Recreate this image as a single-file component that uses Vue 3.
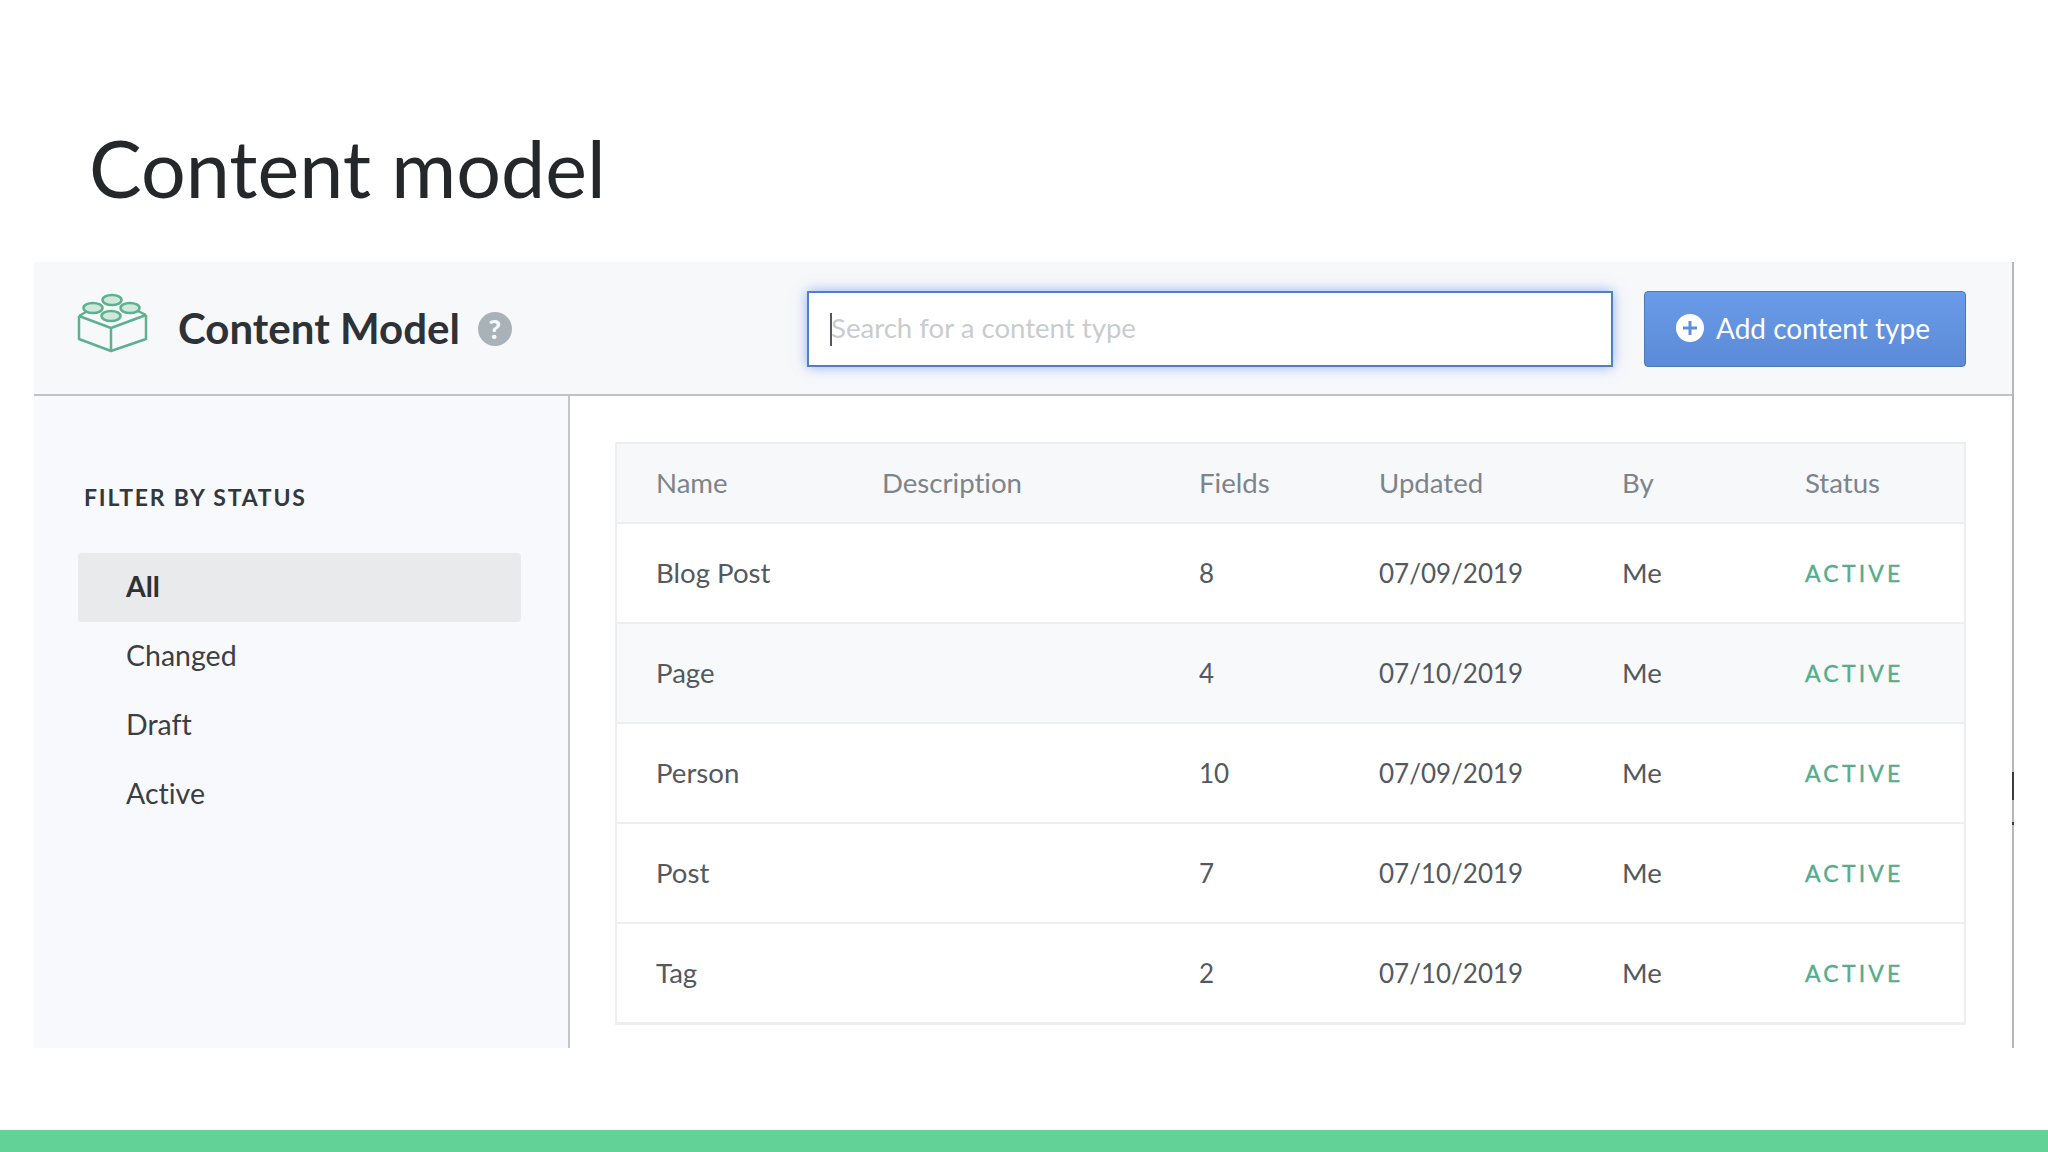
<template>
  <div class="page">
    <h1 class="slide-title">Content model</h1>

    <div class="frame">
      <span class="edge-mark long"></span>
      <span class="edge-mark dot"></span>

      <header class="topbar">
        <svg class="logo" viewBox="15 12 75 62" width="75" height="62">
          <g fill="none" stroke="#5cb18f" stroke-width="2.5" stroke-linejoin="round">
            <path d="M19 36 L51 48 L86 35 M19 36 V59 L51 71 L86 59 V35 M51 48 V71" />
            <path d="M19 36 L26 32 M86 35 L78 31" />
            <ellipse class="stud" cx="52" cy="20" rx="9.5" ry="5" />
            <ellipse class="stud" cx="33" cy="28" rx="9.5" ry="5" />
            <ellipse class="stud" cx="70" cy="28" rx="9.5" ry="5" />
            <ellipse class="stud" cx="51" cy="36" rx="9.5" ry="5" />
          </g>
        </svg>
        <h2 class="app-title">Content Model</h2>
        <span class="help">?</span>
        <div class="search">
          <span class="caret"></span>
          <span class="placeholder">Search for a content type</span>
        </div>
        <button class="add-btn">
          <svg viewBox="0 0 30 30" width="30" height="30">
            <circle cx="15" cy="15" r="14" fill="#fff" />
            <path d="M15 8 V22 M8 15 H22" stroke="#5f8fdc" stroke-width="3" />
          </svg>
          Add content type
        </button>
      </header>

      <div class="body">
        <aside class="sidebar">
          <div class="filter-title">FILTER BY STATUS</div>
          <ul class="filter-list">
            <li
                v-for="(f, i) in filters"
                :key="f"
                class="filter-item"
                :class="{ selected: i === 0 }"
            >{{ f }}</li>
          </ul>
        </aside>

        <main class="content">
          <div class="table">
            <div class="row head">
              <span v-for="c in columns" :key="c">{{ c }}</span>
            </div>
            <div
                v-for="(r, i) in rows"
                :key="r.name"
                class="row"
                :class="{ shaded: i === 1 }"
            >
              <span>{{ r.name }}</span>
              <span></span>
              <span class="num">{{ r.fields }}</span>
              <span class="num">{{ r.updated }}</span>
              <span>Me</span>
              <span class="status">ACTIVE</span>
            </div>
          </div>
        </main>
      </div>
    </div>

    <div class="footer-bar"></div>
  </div>
</template>

<script setup>
const filters = ['All', 'Changed', 'Draft', 'Active']
const columns = ['Name', 'Description', 'Fields', 'Updated', 'By', 'Status']

const rows = [
  { name: 'Blog Post', fields: 8, updated: '07/09/2019' },
  { name: 'Page', fields: 4, updated: '07/10/2019' },
  { name: 'Person', fields: 10, updated: '07/09/2019' },
  { name: 'Post', fields: 7, updated: '07/10/2019' },
  { name: 'Tag', fields: 2, updated: '07/10/2019' }
]
</script>

<style>
html, body {
  margin: 0;
  background: #fff;
}
</style>

<style scoped>
.page {
  width: 2048px;
  height: 1152px;
  display: flex;
  flex-direction: column;
  overflow: hidden;
  font-family: Lato, "Open Sans", sans-serif;
  font-variant-ligatures: none;
  color: #2e3135;
}

.slide-title {
  height: 262px;
  margin: 0;
  padding: 120px 0 0 89px;
  box-sizing: border-box;
  font-size: 79px;
  line-height: 96px;
  font-weight: 400;
  color: #25282b;
}

.frame {
  position: relative;
  width: 1980px;
  height: 786px;
  margin-left: 34px;
  display: flex;
  flex-direction: column;
  box-sizing: border-box;
  border-right: 2px solid #b6b7bb;
}

.edge-mark {
  position: absolute;
  right: -2px;
  width: 2px;
  background: #3a3c40;
}

.edge-mark.long {
  top: 510px;
  height: 28px;
}

.edge-mark.dot {
  top: 560px;
  height: 3px;
}

.topbar {
  height: 134px;
  flex: none;
  box-sizing: border-box;
  display: flex;
  align-items: center;
  padding: 2px 46px 0 41px;
  background: #f7f8fa;
  border-bottom: 2px solid #c0c2c5;
}

.logo {
  flex: none;
  margin-top: -12px;
}

.stud {
  fill: #cfe8dc;
}

.app-title {
  margin: -2px 0 0 28px;
  font-size: 42px;
  font-weight: 700;
  color: #2e3135;
}

.help {
  width: 34px;
  height: 34px;
  margin-left: 18px;
  flex: none;
  border-radius: 50%;
  background: #a9b1b9;
  color: #f7f8fa;
  font-size: 27px;
  font-weight: 900;
  line-height: 34px;
  text-align: center;
}

.search {
  position: relative;
  width: 806px;
  height: 76px;
  margin-left: auto;
  box-sizing: border-box;
  display: flex;
  align-items: center;
  padding-left: 22px;
  background: #fff;
  border: 2px solid #4f7fc4;
  box-shadow: 0 0 12px rgba(80, 130, 225, 0.6);
  font-size: 27.6px;
}

.placeholder {
  color: #c9cccf;
  margin-top: -4px;
}

.caret {
  position: absolute;
  left: 21px;
  top: 20px;
  width: 2px;
  height: 33px;
  background: #55595e;
}

.add-btn {
  width: 322px;
  height: 76px;
  margin-left: 31px;
  flex: none;
  box-sizing: border-box;
  display: flex;
  align-items: center;
  gap: 11px;
  padding: 0 0 2px 30px;
  border: 1px solid #4a78b8;
  border-radius: 4px;
  background: linear-gradient(#6a9be8, #5b8bd7);
  color: #fff;
  font-family: inherit;
  font-size: 28px;
}

.body {
  flex: 1;
  display: flex;
  min-height: 0;
}

.sidebar {
  width: 536px;
  flex: none;
  box-sizing: border-box;
  padding: 84px 47px 0 44px;
  background: #f8f9fc;
  border-right: 2px solid #c4c6ca;
}

.filter-title {
  padding-left: 6px;
  font-size: 23px;
  line-height: 34px;
  font-weight: 700;
  letter-spacing: 1.8px;
  color: #34383c;
}

.filter-list {
  list-style: none;
  margin: 39px 0 0;
  padding: 0;
}

.filter-item {
  height: 69px;
  padding-left: 48px;
  font-size: 28.5px;
  line-height: 66px;
  color: #3b3f44;
}

.filter-item.selected {
  background: #e8eaec;
  border-radius: 4px;
  font-weight: 700;
  color: #2e3135;
}

.content {
  flex: 1;
  padding: 46px 46px 0 45px;
  background: #fff;
}

.table {
  border: 2px solid #eceef0;
  border-bottom-width: 1px;
}

.row {
  height: 100px;
  box-sizing: border-box;
  display: grid;
  grid-template-columns: 226px 317px 180px 243px 183px 1fr;
  align-items: center;
  padding: 0 0 2px 39px;
  border-bottom: 2px solid #eceef0;
  font-size: 27.6px;
  color: #54595f;
}

.row .num {
  font-size: 26px;
  padding-top: 2px;
}

.row.head {
  height: 80px;
  background: #f7f8fa;
  color: #7d848b;
}

.row.shaded {
  background: #f8f9fb;
}

.status {
  padding-top: 2px;
  font-size: 23px;
  letter-spacing: 3.2px;
  color: #55ad8b;
  -webkit-text-stroke: 0.4px #55ad8b;
}

.footer-bar {
  height: 22px;
  margin-top: auto;
  background: #62d296;
}
</style>
